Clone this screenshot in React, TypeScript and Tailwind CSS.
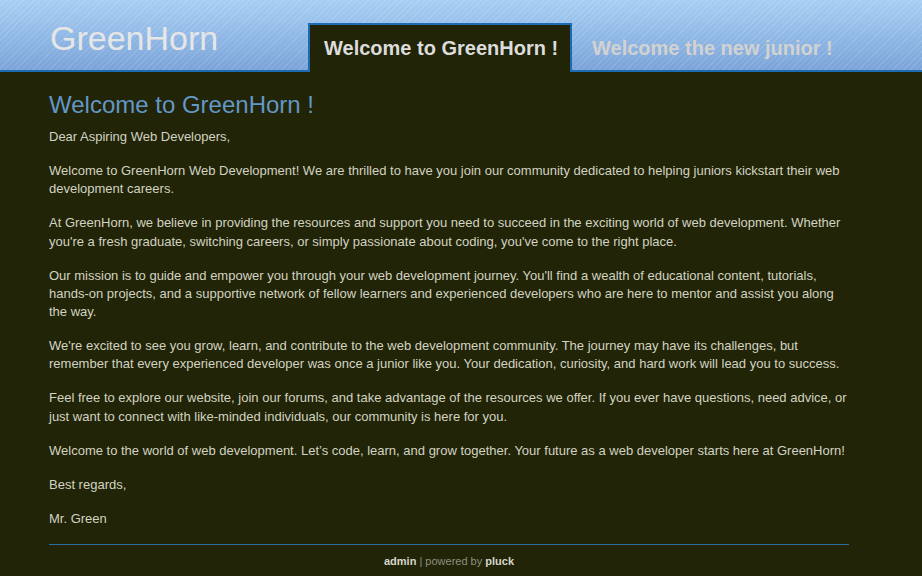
export default function App() {
  const paras = [
    "Dear Aspiring Web Developers,",
    "Welcome to GreenHorn Web Development! We are thrilled to have you join our community dedicated to helping juniors kickstart their web development careers.",
    "At GreenHorn, we believe in providing the resources and support you need to succeed in the exciting world of web development. Whether you're a fresh graduate, switching careers, or simply passionate about coding, you've come to the right place.",
    "Our mission is to guide and empower you through your web development journey. You'll find a wealth of educational content, tutorials, hands-on projects, and a supportive network of fellow learners and experienced developers who are here to mentor and assist you along the way.",
    "We're excited to see you grow, learn, and contribute to the web development community. The journey may have its challenges, but remember that every experienced developer was once a junior like you. Your dedication, curiosity, and hard work will lead you to success.",
    "Feel free to explore our website, join our forums, and take advantage of the resources we offer. If you ever have questions, need advice, or just want to connect with like-minded individuals, our community is here for you.",
    "Welcome to the world of web development. Let\u2019s code, learn, and grow together. Your future as a web developer starts here at GreenHorn!",
    "Best regards,",
    "Mr. Green",
  ];
  return (
    <div className="min-h-[576px] bg-[#212406] font-['Liberation_Sans',Arial,sans-serif]">
      <header className="h-[72px] border-b-2 border-[#1d6cb3] [background:repeating-linear-gradient(135deg,rgba(255,255,255,0.12)_0px,rgba(255,255,255,0.12)_1px,transparent_1px,transparent_4px),linear-gradient(#a7cff4,#7ba3d8)] flex items-end">
        <div className="w-[308px] pl-[50px] self-stretch flex items-start pt-[21px]">
          <span className="text-[34px] leading-none text-[#e6e6e6]">GreenHorn</span>
        </div>
        <div className="h-[49px] -mb-[2px] w-[264px] bg-[#212406] border-2 border-b-0 border-[#1d6cb3] flex items-start pt-[13px] pl-[14px]">
          <span className="text-[20px] font-bold leading-none text-[#dcdcdc]">Welcome to GreenHorn !</span>
        </div>
        <div className="self-stretch flex items-start pt-[38px] pl-[20px]">
          <span className="text-[20px] font-bold leading-none text-[#d2d2d0]">Welcome the new junior !</span>
        </div>
      </header>
      <main className="ml-[49px] w-[800px] pt-[19px]">
        <h1 className="text-[24px] leading-[28px] text-[#6297c8] mb-[9px]">Welcome to GreenHorn !</h1>
        <div className="text-[13px] leading-[18.3px] text-[#d2d3c3]">
          {paras.map((p, i) => (
            <p key={i} className="mb-[15.7px]">{p}</p>
          ))}
        </div>
        <div className="h-px bg-[#2c6ea3] mt-[9px]" />
        <div className="text-center text-[11px] pt-[8px] text-[#8f9080]">
          <span className="font-bold text-[#d6d6cc]">admin</span> | powered by <span className="font-bold text-[#d6d6cc]">pluck</span>
        </div>
      </main>
    </div>
  );
}
